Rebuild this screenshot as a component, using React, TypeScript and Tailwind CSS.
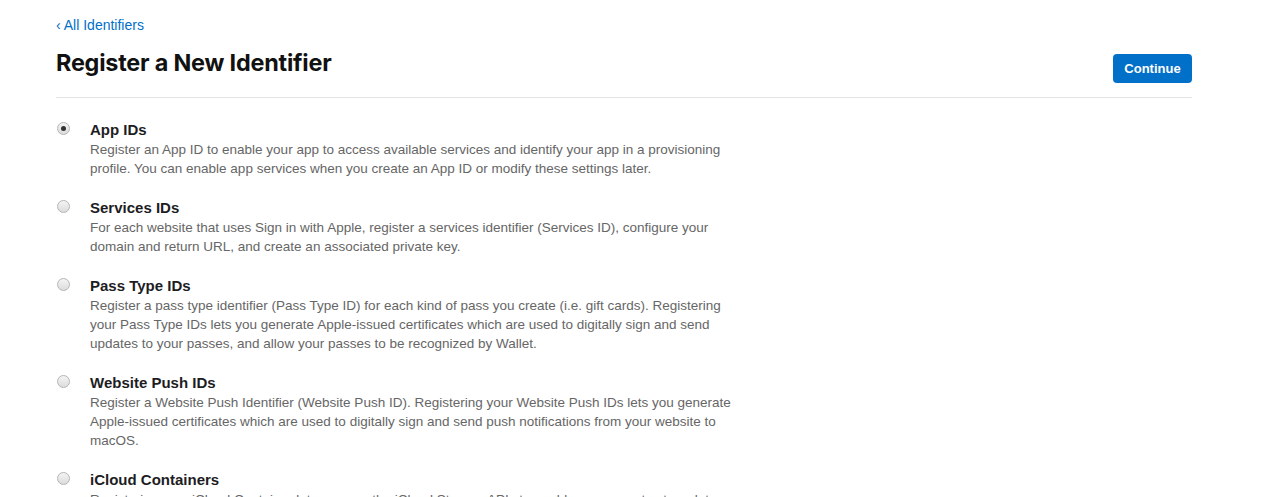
const items = [
  {
    title: "App IDs",
    desc: "Register an App ID to enable your app to access available services and identify your app in a provisioning profile. You can enable app services when you create an App ID or modify these settings later.",
    checked: true,
  },
  {
    title: "Services IDs",
    desc: "For each website that uses Sign in with Apple, register a services identifier (Services ID), configure your domain and return URL, and create an associated private key.",
  },
  {
    title: "Pass Type IDs",
    desc: "Register a pass type identifier (Pass Type ID) for each kind of pass you create (i.e. gift cards). Registering your Pass Type IDs lets you generate Apple-issued certificates which are used to digitally sign and send updates to your passes, and allow your passes to be recognized by Wallet.",
  },
  {
    title: "Website Push IDs",
    desc: "Register a Website Push Identifier (Website Push ID). Registering your Website Push IDs lets you generate Apple-issued certificates which are used to digitally sign and send push notifications from your website to macOS.",
  },
  {
    title: "iCloud Containers",
    desc: "Registering your iCloud Container lets you use the iCloud Storage APIs to enable your apps to store data and documents in iCloud, keeping your apps up to date automatically.",
  },
];

function Radio({ checked }: { checked?: boolean }) {
  return (
    <span className="mt-[2px] flex h-[13px] w-[13px] shrink-0 items-center justify-center rounded-full border border-[#b5b5b5] bg-gradient-to-b from-[#f4f4f4] to-[#dcdcdc]">
      {checked ? <span className="h-[5px] w-[5px] rounded-full bg-[#333]" /> : null}
    </span>
  );
}

export default function App() {
  return (
    <div className="h-[497px] overflow-hidden bg-white font-['Liberation_Sans',Arial,sans-serif]">
      <div className="w-[1136px] pl-[56px] pt-[17px]" style={{ boxSizing: "content-box" }}>
        <a className="block text-[14px] leading-[16px] text-[#0070c9]">‹ All Identifiers</a>
        <div className="mt-[16px] flex items-start justify-between">
          <h1 className="font-['Inter',sans-serif] text-[23.4px] font-bold leading-[28px] tracking-[-0.2px] text-[#111]">
            Register a New Identifier
          </h1>
          <button className="mt-[5px] h-[29px] w-[79px] rounded-[4px] bg-[#0070c9] text-[13px] font-bold text-white">
            Continue
          </button>
        </div>
        <div className="mt-[14px] h-px bg-[#e3e3e3]" />
        <div className="mt-[22px] flex flex-col gap-[20px]">
          {items.map((it) => (
            <div key={it.title} className="flex">
              <div className="w-[34px] pl-[1px]">
                <Radio checked={it.checked} />
              </div>
              <div className="w-[643px]">
                <div className="text-[15px] font-semibold leading-[20px] text-[#1d1d1f]">{it.title}</div>
                <p className="text-[13.5px] leading-[19px] text-[#666]">{it.desc}</p>
              </div>
            </div>
          ))}
        </div>
      </div>
    </div>
  );
}
